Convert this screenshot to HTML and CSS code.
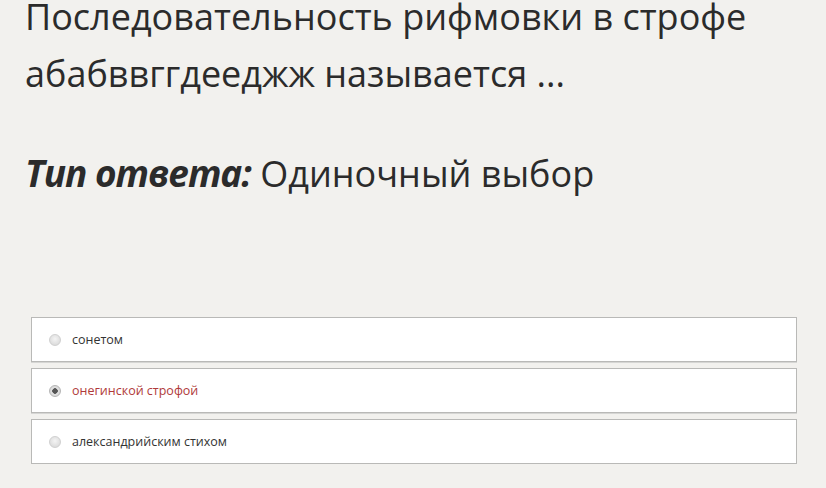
FILE: index.html
```html
<!DOCTYPE html>
<html lang="ru">
<head>
    <meta charset="UTF-8">
    <title>Вопрос</title>
    <link rel="stylesheet" href="styles.css">
</head>
<body>
    <div class="question">
        <h1 class="question-text">Последовательность рифмовки в строфе абабввггдееджж называется ...</h1>
        <p class="answer-type"><b>Тип ответа:</b> Одиночный выбор</p>
    </div>
    <ul class="options">
        <li class="option">
            <span class="radio"></span>
            <span class="label">сонетом</span>
        </li>
        <li class="option selected">
            <span class="radio"></span>
            <span class="label">онегинской строфой</span>
        </li>
        <li class="option">
            <span class="radio"></span>
            <span class="label">александрийским стихом</span>
        </li>
    </ul>
</body>
</html>
```

FILE: styles.css
```css
body {
    margin: 0;
    background-color: #f2f1ee;
    font-family: "Open Sans", "Noto Sans", sans-serif;
    color: #2b2b2b;
    overflow: hidden;
}
.question {
    padding: 0 25px;
}
.question-text {
    margin: -12px 0 0;
    font-size: 36px;
    font-weight: normal;
    line-height: 57px;
}
.answer-type {
    margin: 46px 0 0;
    font-size: 36px;
    line-height: 50px;
}
.answer-type b {
    font-size: 37px;
    font-style: italic;
    font-weight: bold;
    letter-spacing: -1px;
}
.options {
    list-style: none;
    margin: 118px 0 0;
    padding: 0 29px 0 31px;
    display: flex;
    flex-direction: column;
    gap: 6px;
}
.option {
    display: flex;
    align-items: center;
    height: 43px;
    background-color: #fff;
    border: 1px solid #b9b9b7;
    box-shadow: 0 1px 0 #d6d6d4;
    padding-left: 17px;
    font-size: 12.5px;
    color: #333;
}
.radio {
    width: 12px;
    height: 12px;
    border-radius: 50%;
    background: radial-gradient(circle at 50% 40%, #f4f4f4, #d4d4d4);
    border: 1px solid #d0d0d0;
    box-sizing: border-box;
    margin-right: 11px;
}
.selected .radio {
    background: radial-gradient(circle, #555 0 2.5px, #e2e2e2 3px, #cfcfcf);
    border-color: #b5b5b5;
}
.selected .label {
    color: #b03a3a;
}
```
